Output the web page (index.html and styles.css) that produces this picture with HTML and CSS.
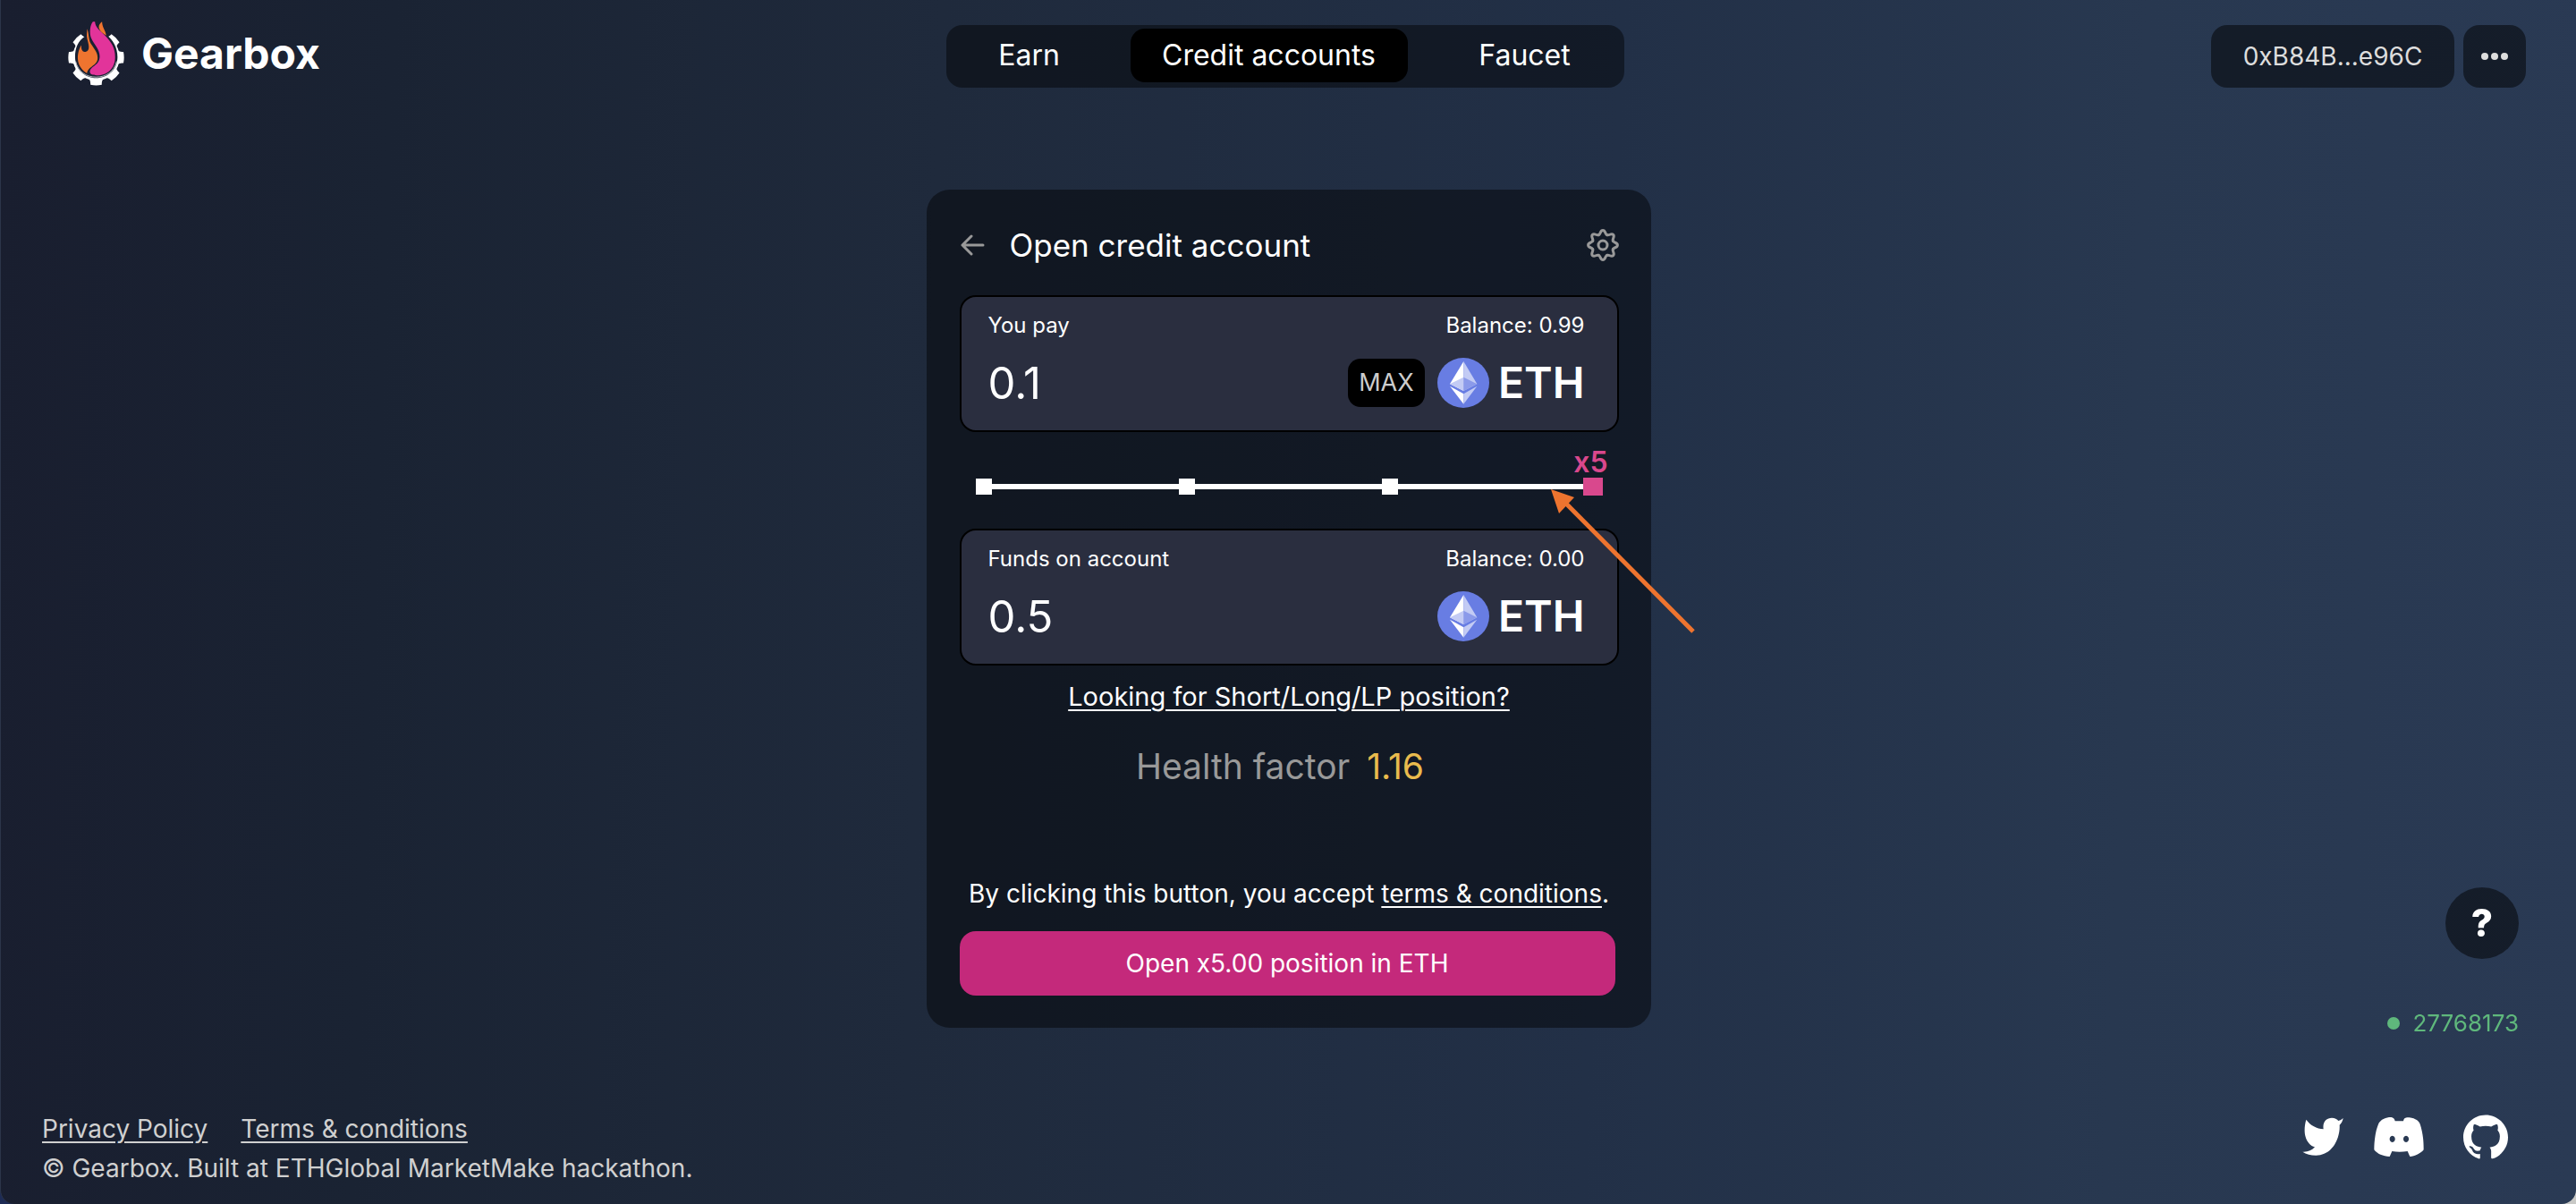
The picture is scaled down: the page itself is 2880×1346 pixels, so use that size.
FILE: index.html
```html
<!DOCTYPE html>
<html lang="en">
<head>
<meta charset="utf-8">
<meta name="viewport" content="width=device-width, initial-scale=1">
<title>Gearbox - Open credit account</title>
<link rel="stylesheet" href="styles.css">
</head>
<body>
<svg class="sprite" aria-hidden="true">
  <symbol id="eth" viewBox="324 60 174 168">
    <ellipse cx="411" cy="144" rx="87" ry="84" fill="#687de3"/>
    <path d="M412 72L366 148L412 171Z" fill="#fff"/>
    <path d="M412 72L457 148L412 171Z" fill="#c3cbf4"/>
    <path d="M366 148L412 125V171Z" fill="#c3cbf4"/>
    <path d="M457 148L412 125V171Z" fill="#8b9aea"/>
    <path d="M366 155L412 181V215Z" fill="#fff"/>
    <path d="M457 155L412 181V215Z" fill="#c3cbf4"/>
  </symbol>
</svg>
<div class="page">
  <header class="header">
    <a class="brand" href="#">
      <svg class="brand-mark" viewBox="228 66 190 216" aria-hidden="true">
        <g fill="#fff" transform="translate(323 187)">
          <path d="M-52-52A73 73 0 1 0 52-52" fill="none" stroke="#fff" stroke-width="12"/>
          <path id="tooth" d="M-31-68C-22-72-19-78-19-92Q0-96 19-92C19-78 22-72 31-68L20-60H-20Z" transform="rotate(0)" visibility="hidden"/>
          <g id="teeth">
            <path d="M-31-68C-22-72-19-78-19-92Q0-96 19-92C19-78 22-72 31-68L20-60H-20Z" transform="rotate(45)"/>
            <path d="M-31-68C-22-72-19-78-19-92Q0-96 19-92C19-78 22-72 31-68L20-60H-20Z" transform="rotate(90)"/>
            <path d="M-31-68C-22-72-19-78-19-92Q0-96 19-92C19-78 22-72 31-68L20-60H-20Z" transform="rotate(135)"/>
            <path d="M-31-68C-22-72-19-78-19-92Q0-96 19-92C19-78 22-72 31-68L20-60H-20Z" transform="rotate(180)"/>
            <path d="M-31-68C-22-72-19-78-19-92Q0-96 19-92C19-78 22-72 31-68L20-60H-20Z" transform="rotate(225)"/>
            <path d="M-31-68C-22-72-19-78-19-92Q0-96 19-92C19-78 22-72 31-68L20-60H-20Z" transform="rotate(270)"/>
            <path d="M-31-68C-22-72-19-78-19-92Q0-96 19-92C19-78 22-72 31-68L20-60H-20Z" transform="rotate(315)"/>
          </g>
        </g>
        <path d="M285 116C262 130 252 155 252 185C252 228 285 256 323 256C362 256 395 228 395 185C395 155 380 125 358 112L320 90Z" fill="#1a2132"/>
        <path d="M254 200C262 235 290 253 323 253C356 253 384 235 392 200" fill="none" stroke="#fff" stroke-width="2"/>
        <path d="M293 90C300 112 297 125 305 140C318 160 328 170 328 188C328 215 296 215 292 240C264 225 258 195 262 175C264 160 270 150 273 145C272 165 280 168 287 168C305 165 297 140 293 125C290 112 292 100 293 90Z" fill="#ee742f"/>
        <path d="M312 66H319C320 85 335 95 350 110C375 135 387 155 387 185C387 225 360 247 325 247C312 247 302 243 302 236C302 215 335 215 335 183C335 160 318 145 308 125C298 105 303 75 312 66Z" fill="#e2349a"/>
        <path d="M343 66C343 85 355 95 357 113C350 108 333 98 332 85C332 75 338 70 343 66Z" fill="#ee742f"/>
      </svg>
      <span class="brand-name">Gearbox</span>
    </a>
    <nav class="nav">
      <a class="nav-link" href="#">Earn</a>
      <a class="nav-link nav-link-active" href="#">Credit accounts</a>
      <a class="nav-link" href="#">Faucet</a>
    </nav>
    <div class="wallet">
      <button class="pill address" type="button">0xB84B...e96C</button>
      <button class="pill more" type="button" aria-label="More">
        <svg width="30" height="10" viewBox="0 0 30 10" fill="#ddd"><circle cx="4" cy="5" r="4"/><circle cx="15" cy="5" r="4"/><circle cx="26" cy="5" r="4"/></svg>
      </button>
    </div>
  </header>

  <main class="main">
    <section class="card">
      <div class="card-head">
        <button class="icon-button" type="button" aria-label="Back">
          <svg width="28" height="24" viewBox="0 0 28 24" fill="none" stroke="#999" stroke-width="3" stroke-linecap="round" stroke-linejoin="round"><path d="M26 12H3M13 2L3 12L13 22"/></svg>
        </button>
        <h1 class="card-title">Open credit account</h1>
        <button class="icon-button" type="button" aria-label="Settings">
          <svg width="36" height="36" viewBox="-18 -18 36 36" fill="none" stroke="#999" stroke-width="3" stroke-linecap="round">
            <path id="lobe" d="M-4.7-11.3C-2.2-12.3-3.2-16.4 0-16.4S2.2-12.3 4.7-11.3"/>
            <use href="#lobe" transform="rotate(45)"/><use href="#lobe" transform="rotate(90)"/><use href="#lobe" transform="rotate(135)"/><use href="#lobe" transform="rotate(180)"/><use href="#lobe" transform="rotate(225)"/><use href="#lobe" transform="rotate(270)"/><use href="#lobe" transform="rotate(315)"/>
            <circle r="5"/>
          </svg>
        </button>
      </div>

      <div class="amount">
        <div class="amount-row">
          <label for="pay">You pay</label>
          <span>Balance: 0.99</span>
        </div>
        <div class="amount-row amount-value">
          <input class="amount-input" id="pay" type="text" value="0.1">
          <button class="max" type="button">MAX</button>
          <span class="token"><svg class="token-icon" aria-hidden="true"><use href="#eth"/></svg>ETH</span>
        </div>
      </div>

      <div class="leverage">
        <label class="leverage-label" for="leverage">x5</label>
        <div class="leverage-track">
          <div class="ticks"><i class="tick"></i><i class="tick"></i><i class="tick"></i><i class="tick"></i></div>
          <input class="slider" id="leverage" type="range" min="2" max="5" value="5">
        </div>
      </div>

      <div class="amount">
        <div class="amount-row">
          <label for="funds">Funds on account</label>
          <span>Balance: 0.00</span>
        </div>
        <div class="amount-row amount-value">
          <input class="amount-input" id="funds" type="text" value="0.5">
          <span class="token"><svg class="token-icon" aria-hidden="true"><use href="#eth"/></svg>ETH</span>
        </div>
      </div>

      <a class="position-link" href="#">Looking for Short/Long/LP position?</a>
      <p class="health">Health factor <strong class="health-value">1.16</strong></p>
      <p class="accept">By clicking this button, you accept <a href="#">terms &amp; conditions</a>.</p>
      <button class="submit" type="button">Open x5.00 position in ETH</button>

      <svg class="pointer" width="164" height="164" viewBox="0 0 164 164" aria-hidden="true">
        <path d="M16 15L159 159" stroke="#ee742f" stroke-width="5"/>
        <path d="M0 0L26 9L9 27Z" fill="#ee742f"/>
      </svg>
    </section>
  </main>

  <footer class="footer">
    <div>
      <div class="legal"><a href="#">Privacy Policy</a><a href="#">Terms &amp; conditions</a></div>
      <div>© Gearbox. Built at ETHGlobal MarketMake hackathon.</div>
    </div>
    <div class="social">
      <a href="#" aria-label="Twitter"><svg width="46" height="44" viewBox="27 34 138 132" fill="#fff"><path d="M40 42C55 62 75 72 98 74C94 50 108 36 126 36C136 36 144 40 148 46C154 45 159 42 164 37C162 48 158 54 152 60C155 100 130 162 73 162C55 162 40 158 28 150C45 151 58 146 69 134C45 128 25 95 40 42Z"/></svg></a>
      <a href="#" aria-label="Discord"><svg width="56" height="44" viewBox="269 39 168 132" fill="#fff" fill-rule="evenodd"><path d="M320 39C330 39 338 40 340 52H368C370 40 378 39 388 40C410 43 420 52 424 62C433 90 436 115 436 148C428 160 405 170 390 171L382 153Q354 158 330 153L322 171C300 170 280 162 270 148C270 120 274 85 285 60C290 50 303 42 320 39ZM331 101a9 11 0 1 0 .1 0ZM377 101a9 11 0 1 0 .1 0Z"/></svg></a>
      <a href="#" aria-label="GitHub"><svg width="50" height="50" viewBox="0 0 24 24" fill="#fff"><path d="M12 .297c-6.63 0-12 5.373-12 12 0 5.303 3.438 9.8 8.205 11.385.6.113.82-.258.82-.577 0-.285-.01-1.04-.015-2.04-3.338.724-4.042-1.61-4.042-1.61C4.422 18.07 3.633 17.7 3.633 17.7c-1.087-.744.084-.729.084-.729 1.205.084 1.838 1.236 1.838 1.236 1.07 1.835 2.809 1.305 3.495.998.108-.776.417-1.305.76-1.605-2.665-.3-5.466-1.332-5.466-5.93 0-1.31.465-2.38 1.235-3.22-.135-.303-.54-1.523.105-3.176 0 0 1.005-.322 3.3 1.23.96-.267 1.98-.399 3-.405 1.02.006 2.04.138 3 .405 2.28-1.552 3.285-1.23 3.285-1.23.645 1.653.24 2.873.12 3.176.765.84 1.23 1.91 1.23 3.22 0 4.61-2.805 5.625-5.475 5.92.42.36.81 1.096.81 2.22 0 1.606-.015 2.896-.015 3.286 0 .315.21.69.825.57C20.565 22.092 24 17.592 24 12.297c0-6.627-5.373-12-12-12"/></svg></a>
    </div>
  </footer>
</div>

<aside class="floating">
  <button class="help" type="button" aria-label="Help">?</button>
  <div class="block"><i class="block-dot"></i>27768173</div>
</aside>
</body>
</html>
```
FILE: styles.css
```css
* { box-sizing: border-box; }

html { background: linear-gradient(90deg, #1d2b55, #c9c9c6); }

body {
  margin: 0;
  color: #fff;
  font: 400 28px/44px Inter, "Liberation Sans", sans-serif;
}

h1, p { margin: 0; font-weight: 400; }
a { color: inherit; text-underline-offset: 4px; text-decoration-thickness: 2px; text-decoration-skip-ink: auto; }
button, input { font: inherit; color: inherit; border: 0; padding: 0; margin: 0; background: none; }
button { cursor: pointer; }
svg { display: block; }

.sprite { position: absolute; width: 0; height: 0; }

.page {
  min-height: 100vh;
  display: flex;
  flex-direction: column;
  border-left: 1px solid #2c3549;
  border-radius: 0 0 16px 16px;
  background: linear-gradient(92deg, #191e2f 0%, #1a2333 15%, #1f2a3c 36%, #223047 62%, #283850 82%, #2a3a54 100%);
}

/* Header */
.header {
  display: grid;
  grid-template-columns: 1fr auto 1fr;
  align-items: start;
  padding: 22px 56px 0 48px;
}

.brand {
  display: flex;
  align-items: center;
  gap: 19px;
  padding-left: 27px;
  text-decoration: none;
}

.brand-mark { width: 63px; height: 72px; }
.brand-name { font-size: 48px; font-weight: 700; line-height: 76px; }

.nav {
  display: grid;
  grid-template-columns: 202px 310px 238px;
  margin-top: 6px;
  padding: 4px;
  height: 70px;
  border-radius: 18px;
  background: rgba(0, 0, 0, .45);
  font-size: 32px;
}

.nav-link {
  height: 60px;
  line-height: 60px;
  text-align: center;
  text-decoration: none;
  border-radius: 16px;
}
.nav-link:first-child { padding-right: 24px; }
.nav-link:last-child { padding-left: 24px; }
.nav-link-active { background: #000; }

.wallet { display: flex; justify-content: flex-end; gap: 10px; margin-top: 6px; }
.pill { height: 70px; border-radius: 18px; background: rgba(0, 0, 0, .5); color: #ddd; }
.address { width: 272px; }
.more { width: 70px; display: grid; place-items: center; }

/* Card */
.main { display: flex; justify-content: center; padding: 114px 0 60px; }

.card {
  position: relative;
  display: flex;
  flex-direction: column;
  width: 100%;
  max-width: 810px;
  padding: 32px 36px 36px 37px;
  border-radius: 26px;
  background: rgba(0, 0, 0, .45);
}

.card-head { display: flex; align-items: center; height: 60px; margin-bottom: 26px; }
.card-title { flex: 1; margin-left: 28px; font-size: 35px; }

.amount {
  padding: 16px 36px 24px 30px;
  border: 2px solid #000;
  border-radius: 18px;
  background: #2a2e3f;
  font-size: 24px;
  line-height: 32px;
}

.amount-row { display: flex; justify-content: space-between; }
.amount-value { align-items: center; height: 58px; margin-top: 19px; }
.amount-input { flex: 1; min-width: 0; height: 58px; font-size: 49px; outline: 0; }

.max {
  width: 86px;
  height: 54px;
  margin-right: 14px;
  border-radius: 14px;
  background: #000;
  color: #ccc;
  font-size: 27px;
}

.token { display: flex; align-items: center; gap: 10px; font-size: 48px; font-weight: 600; line-height: 58px; }
.token-icon { width: 58px; height: 56px; }

/* Leverage slider */
.leverage { padding: 16px 18px 37px 16px; }
.leverage-label {
  display: block;
  margin-right: -6px;
  text-align: right;
  font-size: 32px;
  font-weight: 600;
  line-height: 35px;
  color: #d9488d;
}
.leverage-track { display: grid; align-items: center; }
.ticks, .slider { grid-area: 1 / 1; }
.ticks {
  display: flex;
  justify-content: space-between;
  margin: 0 2px;
  background: linear-gradient(#fff, #fff) center / 100% 6px no-repeat;
}
.tick { width: 18px; height: 18px; background: #fff; }
.slider { appearance: none; width: 100%; height: 20px; }
.slider::-webkit-slider-thumb { appearance: none; width: 22px; height: 20px; background: #d9488d; }
.slider::-moz-range-thumb { width: 22px; height: 20px; border: 0; border-radius: 0; background: #d9488d; }

.position-link { align-self: center; margin-top: 15px; font-size: 29px; line-height: 40px; }
.health { margin: 34px 20px 0 0; text-align: center; font-size: 39px; line-height: 48px; color: #999; }
.health-value { margin-left: 8px; font-weight: 400; color: #e9bb4d; }
.accept { margin-top: 98px; line-height: 40px; text-align: center; }
.submit { height: 72px; margin: 22px 4px 0 0; border-radius: 18px; background: #c4297b; }

/* Callout that points at the slider */
.pointer { position: absolute; top: 335px; right: -52px; }

/* Footer */
.footer {
  display: flex;
  justify-content: space-between;
  align-items: center;
  margin-top: auto;
  padding: 0 76px 18px 46px;
  color: #d0d0d0;
}
.legal { display: flex; gap: 37px; }
.social { display: flex; align-items: center; gap: 40px; padding-bottom: 26px; }
.social a:nth-child(2) { margin-right: 4px; margin-left: -6px; }

/* Help and block number float over the page */
.floating {
  position: fixed;
  right: 64px;
  bottom: 180px;
  display: flex;
  flex-direction: column;
  align-items: flex-end;
  gap: 50px;
}
.help { width: 82px; height: 80px; border-radius: 50%; background: rgba(0, 0, 0, .5); font-size: 42px; font-weight: 800; }
.block { display: flex; align-items: center; gap: 14px; font-size: 26px; color: #5fb87c; }
.block-dot { width: 14px; height: 14px; border-radius: 50%; background: #5fb87c; }
```
